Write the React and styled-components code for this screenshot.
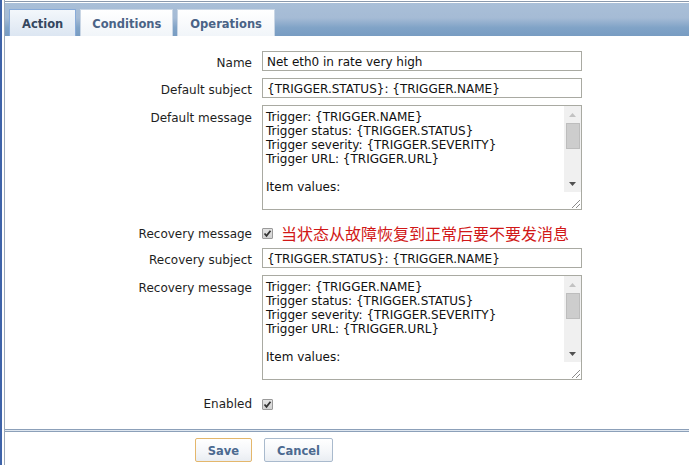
import React from "react";
import styled, { createGlobalStyle } from "styled-components";

const Global = createGlobalStyle`
  html, body { margin: 0; padding: 0; background: #ffffff; }
  body { font-family: "DejaVu Sans", Verdana, sans-serif; font-size: 12px; color: #1e1e1e; }
  * { box-sizing: border-box; }
`;

const Page = styled.div`
  min-height: 465px;
  border-left: 2px solid #3e63a9;
  padding-left: 2px;
  background: #fff;
`;

const Panel = styled.div`
  min-height: 465px;
  border-left: 1px solid #9aa8ba;
  padding-top: 1px;
  display: flex;
  flex-direction: column;
`;

const TopRule = styled.div`
  height: 1px;
  background: #8a99ad;
  margin-bottom: 1px;
`;

const TabBar = styled.div`
  height: 33px;
  display: flex;
  align-items: flex-end;
  gap: 4px;
  padding-left: 4px;
  background: linear-gradient(to bottom, #a9bfd8 0%, #a5bbd5 45%, #80a3c7 75%, #789cc2 100%);
`;

const Tab = styled.div`
  height: 27px;
  padding: 1px ${p => p.$pad}px 0;
  display: flex;
  align-items: center;
  font-weight: bold;
  font-size: 11.5px;
  color: ${p => (p.$active ? "#34465e" : "#4a6386")};
  border: 1px solid ${p => (p.$active ? "#88abd9" : "#c9d6e5")};
  border-bottom: none;
  background: ${p =>
    p.$active
      ? "linear-gradient(to bottom, #f3f7fb 0%, #dce6f2 100%)"
      : "linear-gradient(to bottom, #ffffff 0%, #f1f5f9 100%)"};
`;

const Form = styled.div`
  display: grid;
  grid-template-columns: 247px 320px;
  grid-template-rows: 20px 20px 105px 24px 20px 105px 20px;
  column-gap: 10px;
  row-gap: 7px;
  padding: 15px 0 22px;
`;

const Label = styled.div`
  text-align: right;
  line-height: ${p => (p.$top ? "14px" : "20px")};
  padding-top: ${p => (p.$top ? 6 : 2 + (p.$shift || 0))}px;
  white-space: nowrap;
`;

const Input = styled.div`
  height: 20px;
  border: 1px solid #a9aaa2;
  padding: 2px 4px 0;
  line-height: 16px;
  white-space: nowrap;
  overflow: hidden;
  color: #111;
`;

const TextBox = styled.div`
  height: 105px;
  border: 1px solid #a9aaa2;
  display: grid;
  grid-template-columns: 1fr 17px;
  overflow: hidden;
`;

const TextContent = styled.div`
  padding: 4px 3px 0;
  line-height: 14px;
  white-space: pre;
  overflow: hidden;
  color: #111;
`;

const ScrollBar = styled.div`
  display: grid;
  grid-template-rows: 17px 1fr 17px 17px;
  background: #f0f0f0;
`;

const ArrowButton = styled.div`
  display: flex;
  align-items: center;
  justify-content: center;
`;

const Track = styled.div`
  padding: 0 1px 0 2px;
`;

const Thumb = styled.div`
  height: 26px;
  background: #cdcdcd;
  border: 1px solid #bdbdbd;
`;

const Grip = styled.div`
  background: #ffffff;
  display: flex;
  align-items: flex-end;
  justify-content: flex-end;
  padding: 0 1px 1px 0;
`;

const CheckLine = styled.div`
  display: flex;
  align-items: center;
  gap: 8px;
  height: 20px;
  margin-top: ${p => p.$shift || 0}px;
`;

const Box = styled.span`
  width: 11px;
  height: 11px;
  border: 1px solid #9a9a9a;
  border-radius: 1px;
  background: linear-gradient(to bottom, #e4e4e4, #d2d2d2);
  display: inline-flex;
  align-items: center;
  justify-content: center;
`;

const Note = styled.span`
  font-family: "Noto Sans CJK SC", sans-serif;
  font-size: 16px;
  color: #d11818;
  line-height: 20px;
`;

const Separator = styled.div`
  height: 3px;
  border-top: 1px solid #8ca0b9;
  border-bottom: 1px solid #8ca0b9;
  background: #dfe7f0;
`;

const Footer = styled.div`
  display: grid;
  grid-template-columns: 247px 320px;
  column-gap: 12px;
  padding-top: 6px;
`;

const Cell = styled.div`
  display: flex;
  justify-content: ${p => (p.$end ? "flex-end" : "flex-start")};
`;

const Button = styled.div`
  height: 24px;
  padding: 1px 12px 0;
  display: flex;
  align-items: center;
  font-weight: bold;
  font-size: 11.5px;
  color: #4c6a90;
  border: 1px solid ${p => (p.$primary ? "#e4b76c" : "#a9bacd")};
  border-radius: 2px;
  background: linear-gradient(to bottom, #ffffff 0%, #f4f6f9 60%, #e9edf2 100%);
`;

const Check = () => (
  <Box>
    <svg width="9" height="9" viewBox="0 0 9 9">
      <path d="M1.5 4.5 L3.5 6.8 L7.5 1.8" fill="none" stroke="#333" strokeWidth="1.8" />
    </svg>
  </Box>
);

const message = `Trigger: {TRIGGER.NAME}
Trigger status: {TRIGGER.STATUS}
Trigger severity: {TRIGGER.SEVERITY}
Trigger URL: {TRIGGER.URL}

Item values:

1. {ITEM.NAME1} ({HOST.NAME1}:{ITEM.KEY1}): {ITEM.VALUE1}`;

const MessageBox = () => (
  <TextBox>
    <TextContent>{message}</TextContent>
    <ScrollBar>
      <ArrowButton>
        <svg width="7" height="4" viewBox="0 0 7 4"><path d="M0 4 L3.5 0 L7 4 Z" fill="#c2c2c2" /></svg>
      </ArrowButton>
      <Track><Thumb /></Track>
      <ArrowButton>
        <svg width="7" height="4" viewBox="0 0 7 4"><path d="M0 0 L3.5 4 L7 0 Z" fill="#505050" /></svg>
      </ArrowButton>
      <Grip>
        <svg width="9" height="9" viewBox="0 0 9 9">
          <path d="M9 1 L1 9 M9 5 L5 9" stroke="#8a8a8a" strokeWidth="1" />
        </svg>
      </Grip>
    </ScrollBar>
  </TextBox>
);

export default function App() {
  return (
    <>
      <Global />
      <Page>
        <Panel>
          <TopRule />
          <TabBar>
            <Tab $active $pad={12}>Action</Tab>
            <Tab $pad={11}>Conditions</Tab>
            <Tab $pad={12}>Operations</Tab>
          </TabBar>
          <Form>
            <Label>Name</Label>
            <Input>Net eth0 in rate very high</Input>

            <Label>Default subject</Label>
            <Input>{"{TRIGGER.STATUS}: {TRIGGER.NAME}"}</Input>

            <Label $top>Default message</Label>
            <MessageBox />

            <Label $shift={5}>Recovery message</Label>
            <CheckLine $shift={6}>
              <Check />
              <Note>当状态从故障恢复到正常后要不要发消息</Note>
            </CheckLine>

            <Label>Recovery subject</Label>
            <Input>{"{TRIGGER.STATUS}: {TRIGGER.NAME}"}</Input>

            <Label $top>Recovery message</Label>
            <MessageBox />

            <Label $shift={5}>Enabled</Label>
            <CheckLine $shift={7}>
              <Check />
            </CheckLine>
          </Form>
          <Separator />
          <Footer>
            <Cell $end>
              <Button $primary>Save</Button>
            </Cell>
            <Cell>
              <Button>Cancel</Button>
            </Cell>
          </Footer>
        </Panel>
      </Page>
    </>
  );
}
